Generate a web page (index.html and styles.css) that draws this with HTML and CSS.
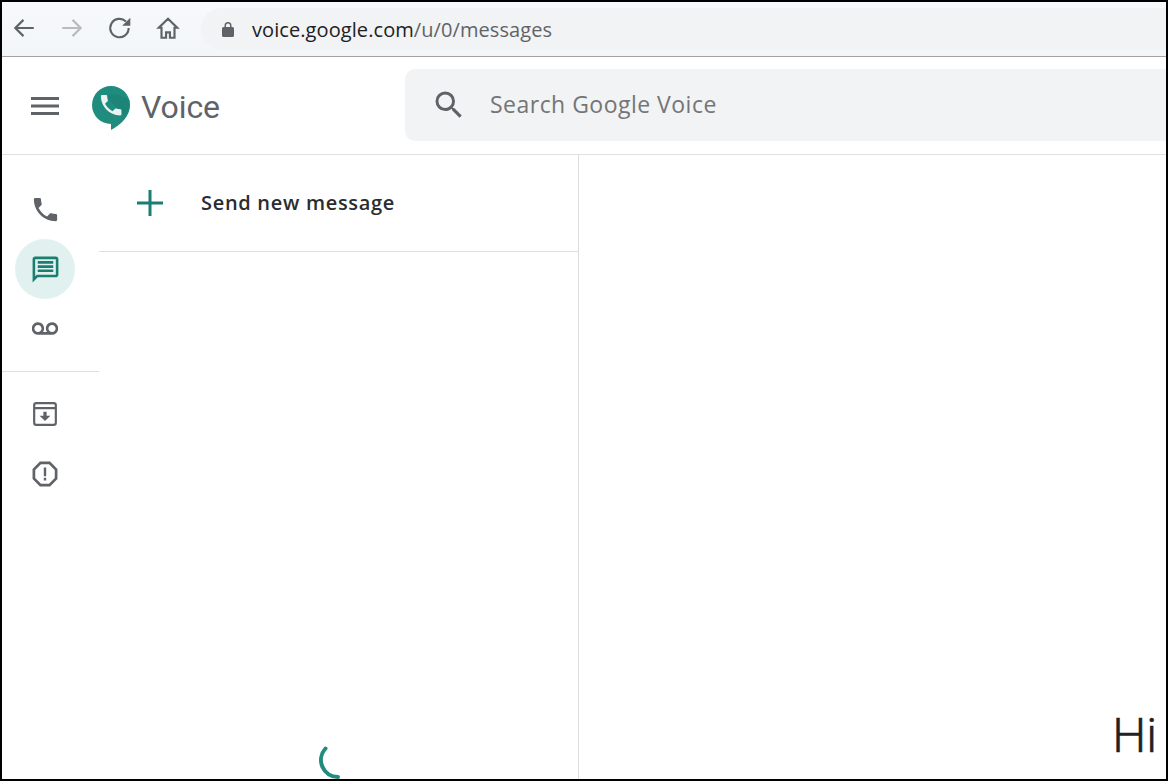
FILE: index.html
```html
<!DOCTYPE html>
<html lang="en">
<head>
<meta charset="utf-8">
<title>Voice</title>
<link rel="stylesheet" href="styles.css">
</head>
<body>
<div class="frame">
  <div class="toolbar">
    <div class="navs">
      <svg class="nav" viewBox="0 0 24 24"><path class="nav-line" d="M21 12H4.500M11.500 4.500 4 12l7.500 7.500"/></svg>
      <svg class="nav faded" viewBox="0 0 24 24"><path class="nav-line" d="M3 12h16.500M12.500 4.500 20 12l-7.500 7.500"/></svg>
      <svg class="nav" viewBox="0 0 24 24"><path class="nav-line" d="M20 12a8.500 8.500 0 1 1-2.500-6"/><path class="nav-fill" d="M21.500 2.500V10H14z"/></svg>
      <svg class="nav" viewBox="0 0 24 24"><path class="nav-line" d="M12 3.500 3.500 11.800H6V21h4.200v-5h3.600v5H18v-9.200h2.500z"/></svg>
    </div>
    <div class="omnibox">
      <svg class="lock" viewBox="0 0 12 16"><path d="M2.500 6V4.500a3.500 3.500 0 0 1 7 0V6h1A1.500 1.500 0 0 1 12 7.500v7a1.500 1.500 0 0 1-1.500 1.500h-9A1.500 1.500 0 0 1 0 14.500v-7A1.500 1.500 0 0 1 1.500 6zM4 6h4V4.500a2 2 0 0 0-4 0z"/></svg>
      <span class="url"><span class="url-host">voice.google.com</span>/u/0/messages</span>
    </div>
  </div>
  <header class="appbar">
    <svg class="menu" viewBox="0 0 28 18"><path d="M0 0h28v3H0zM0 7.500h28v3H0zM0 15h28v3H0z"/></svg>
    <svg class="logo" viewBox="0 0 38 44">
      <path class="logo-bubble" d="M19 0a19 19 0 0 1 19 19c0 11-8.500 19.500-19 25v-6A19 19 0 0 1 19 0z"/>
      <path class="logo-shade" d="M13 10 33 30 38 22V14L24 8z"/>
      <path class="logo-phone" transform="translate(5.500 5.500) scale(1.14)" d="M6.620 10.790c1.440 2.830 3.760 5.140 6.590 6.590l2.200-2.200c.27-.27.67-.36 1.020-.24 1.120.37 2.330.57 3.570.57.550 0 1 .45 1 1V20c0 .55-.45 1-1 1-9.390 0-17-7.610-17-17 0-.55.45-1 1-1h3.500c.55 0 1 .45 1 1 0 1.250.2 2.450.57 3.570.11.350.03.740-.25 1.020l-2.200 2.200z"/>
    </svg>
    <span class="brand">Voice</span>
    <div class="search">
      <svg class="search-icon" viewBox="0 0 24 24"><path d="M15.500 14h-.79l-.28-.27A6.470 6.470 0 0 0 16 9.500 6.500 6.500 0 1 0 9.500 16c1.610 0 3.090-.59 4.230-1.570l.27.28v.79l5 4.990L20.490 19l-4.990-5zm-6 0C7.010 14 5 11.990 5 9.500S7.010 5 9.500 5 14 7.010 14 9.500 11.990 14 9.500 14z"/></svg>
      <span class="search-text">Search Google Voice</span>
    </div>
  </header>
  <div class="body">
    <nav class="rail">
      <div class="rail-group first">
        <div class="rail-item">
          <svg class="ri phone" viewBox="0 0 24 24"><path d="M6.620 10.790c1.440 2.830 3.760 5.140 6.590 6.590l2.200-2.200c.27-.27.67-.36 1.020-.24 1.120.37 2.330.57 3.570.57.550 0 1 .45 1 1V20c0 .55-.45 1-1 1-9.390 0-17-7.610-17-17 0-.55.45-1 1-1h3.500c.55 0 1 .45 1 1 0 1.250.2 2.450.57 3.570.11.350.03.740-.25 1.020l-2.200 2.200z"/></svg>
        </div>
        <div class="rail-item active">
          <svg class="ri" viewBox="0 0 24 24"><path d="M20 2H4c-1.100 0-2 .9-2 2v18l4-4h14c1.100 0 2-.9 2-2V4c0-1.100-.9-2-2-2zm0 14H5.170L4 17.170V4h16v12zM6 5.500h12v2H6zM6 8.800h12v2H6zM6 12h12v2H6z"/></svg>
        </div>
        <div class="rail-item">
          <svg class="ri" viewBox="0 0 24 24"><path d="M18.500 5.700C15.300 5.700 12.800 8.300 12.800 11.500c0 1.300.4 2.400 1.100 3.300H10.100c.7-.9 1.100-2 1.100-3.300 0-3.200-2.500-5.800-5.700-5.800S-.2 8.300-.2 11.500 2.300 17.300 5.500 17.300h13c3.200 0 5.700-2.600 5.700-5.800s-2.500-5.800-5.700-5.800zm-13 9.100C3.700 14.800 2.200 13.300 2.200 11.500S3.700 8.200 5.500 8.200 8.800 9.700 8.800 11.500 7.300 14.800 5.500 14.800zm13 0c-1.800 0-3.300-1.500-3.300-3.300s1.500-3.300 3.300-3.300 3.300 1.500 3.300 3.300-1.500 3.300-3.300 3.300z"/></svg>
        </div>
      </div>
      <div class="rail-group second">
        <div class="rail-item">
          <svg class="ri" viewBox="0 0 24 24"><path d="M4 1h16a3 3 0 0 1 3 3v16a3 3 0 0 1-3 3H4a3 3 0 0 1-3-3V4a3 3 0 0 1 3-3zm0 2a1 1 0 0 0-1 1v1.500h18V4a1 1 0 0 0-1-1zM3 7.500V20a1 1 0 0 0 1 1h16a1 1 0 0 0 1-1V7.500zM10.500 10h3v3.500h3.500L12 18.500 7 13.500h3.500z"/></svg>
        </div>
        <div class="rail-item">
          <svg class="ri" viewBox="0 0 24 24"><path d="M7.300 .5h9.400l6.800 6.800v9.400l-6.800 6.800H7.300L.5 16.700V7.300zM8.300 3 3 8.300v7.400L8.300 21h7.400L21 15.700V8.300L15.700 3zM10.900 6h2.200v8h-2.200zM10.900 15.500h2.200v2.500h-2.200z"/></svg>
        </div>
      </div>
    </nav>
    <section class="list">
      <div class="compose">
        <svg class="plus" viewBox="0 0 26 26"><path d="M11.500 0h3v11.500H26v3H14.500V26h-3V14.500H0v-3h11.500z"/></svg>
        <span class="compose-text">Send new message</span>
      </div>
      <svg class="spinner" viewBox="0 0 40 40"><path d="M7.500 3.500A17 17 0 0 0 20 32"/></svg>
    </section>
    <main class="detail">
      <span class="hi">Hi</span>
    </main>
  </div>
</div>
</body>
</html>
```

FILE: styles.css
```css
* { box-sizing: border-box; }
html, body { margin: 0; padding: 0; background: #fff; }
.frame {
  width: 1168px;
  height: 781px;
  border: 2px solid #000;
  display: flex;
  flex-direction: column;
  overflow: hidden;
  background: #fff;
}
.toolbar {
  height: 55px;
  flex: none;
  display: flex;
  align-items: center;
  background: linear-gradient(#f7f9fc, #f2f6f9);
  border-bottom: 1px solid #a3a3a3;
  padding-bottom: 2px;
}
.navs { display: flex; gap: 22px; padding-left: 9px; width: 199px; flex: none; }
.nav { width: 26px; height: 26px; display: block; }
.nav-line { fill: none; stroke: #5f6368; stroke-width: 2; }
.nav-fill { fill: #5f6368; }
.faded .nav-line { stroke: #b9bbbe; }
.omnibox {
  flex: 1;
  height: 42px;
  margin-top: 2px;
  background: #f1f3f4;
  border-radius: 21px 0 0 21px;
  display: flex;
  align-items: center;
  padding-left: 21px;
}
.lock { width: 12px; height: 16px; fill: #5f6368; flex: none; }
.url {
  margin-left: 18px;
  font: 20px "Open Sans", sans-serif;
  color: #5f6368;
  letter-spacing: 0.08px;
  white-space: nowrap;
}
.url-host { color: #202124; }
.appbar {
  height: 98px;
  flex: none;
  display: flex;
  align-items: center;
  border-bottom: 1px solid #e0e0e0;
  padding-left: 29px;
}
.menu { width: 28px; height: 18px; fill: #5f6368; flex: none; }
.logo { width: 38px; height: 44px; margin-left: 33px; margin-top: 4px; flex: none; }
.logo-bubble { fill: #1f8c7d; }
.logo-shade { fill: #17796c; opacity: 0.35; }
.logo-phone { fill: #e9f3f1; }
.brand {
  margin-left: 11px;
  font: 400 32px Roboto, sans-serif;
  color: #5f6368;
  letter-spacing: -0.1px;
  position: relative;
  top: 1px;
}
.search {
  margin-left: auto;
  width: 761px;
  height: 72px;
  margin-bottom: 2px;
  background: #f1f3f4;
  border-radius: 10px 0 0 10px;
  display: flex;
  align-items: center;
  padding-left: 26px;
}
.search-icon { width: 36px; height: 36px; fill: #5f6368; flex: none; }
.search-text {
  margin-left: 23px;
  font: 400 23px "Open Sans", sans-serif;
  color: #757575;
  letter-spacing: 0.48px;
  white-space: nowrap;
  margin-bottom: 2px;
}
.body { flex: 1; display: flex; min-height: 0; }
.rail { width: 97px; flex: none; }
.rail-group.first { padding: 24px 0 12px 0; width: 97px; height: 217px; border-bottom: 1px solid #e0e0e0; }
.rail-group.second { padding-top: 12px; }
.rail-item {
  width: 60px;
  height: 60px;
  margin-left: 13px;
  border-radius: 50%;
  display: flex;
  align-items: center;
  justify-content: center;
}
.ri { width: 26px; height: 26px; fill: #5f6368; }
.ri.phone { width: 31px; height: 31px; }
.active { background: #e1f1ef; }
.active .ri { fill: #1a7f72; width: 31px; height: 31px; }
.list {
  width: 480px;
  flex: none;
  position: relative;
  border-right: 1px solid #dadce0;
}
.compose {
  height: 97px;
  display: flex;
  align-items: center;
  border-bottom: 1px solid #e0e0e0;
  padding-left: 38px;
}
.plus { width: 26px; height: 26px; fill: #1a7f72; flex: none; }
.compose-text {
  margin-left: 38px;
  font: 600 20px "Open Sans", sans-serif;
  color: #2b2c2f;
  letter-spacing: 0.7px;
  white-space: nowrap;
  margin-bottom: 2px;
}
.spinner {
  position: absolute;
  left: 219px;
  top: 590px;
  width: 40px;
  height: 40px;
  fill: none;
  stroke: #1f8c7d;
  stroke-width: 4;
  stroke-linecap: round;
}
.detail {
  flex: 1;
  display: flex;
  align-items: flex-end;
  justify-content: flex-end;
  padding-right: 9px;
}
.hi {
  font: 300 48px/1 Roboto, sans-serif;
  -webkit-text-stroke: 0.5px #202124;
  color: #202124;
  margin-bottom: 19px;
}
```
